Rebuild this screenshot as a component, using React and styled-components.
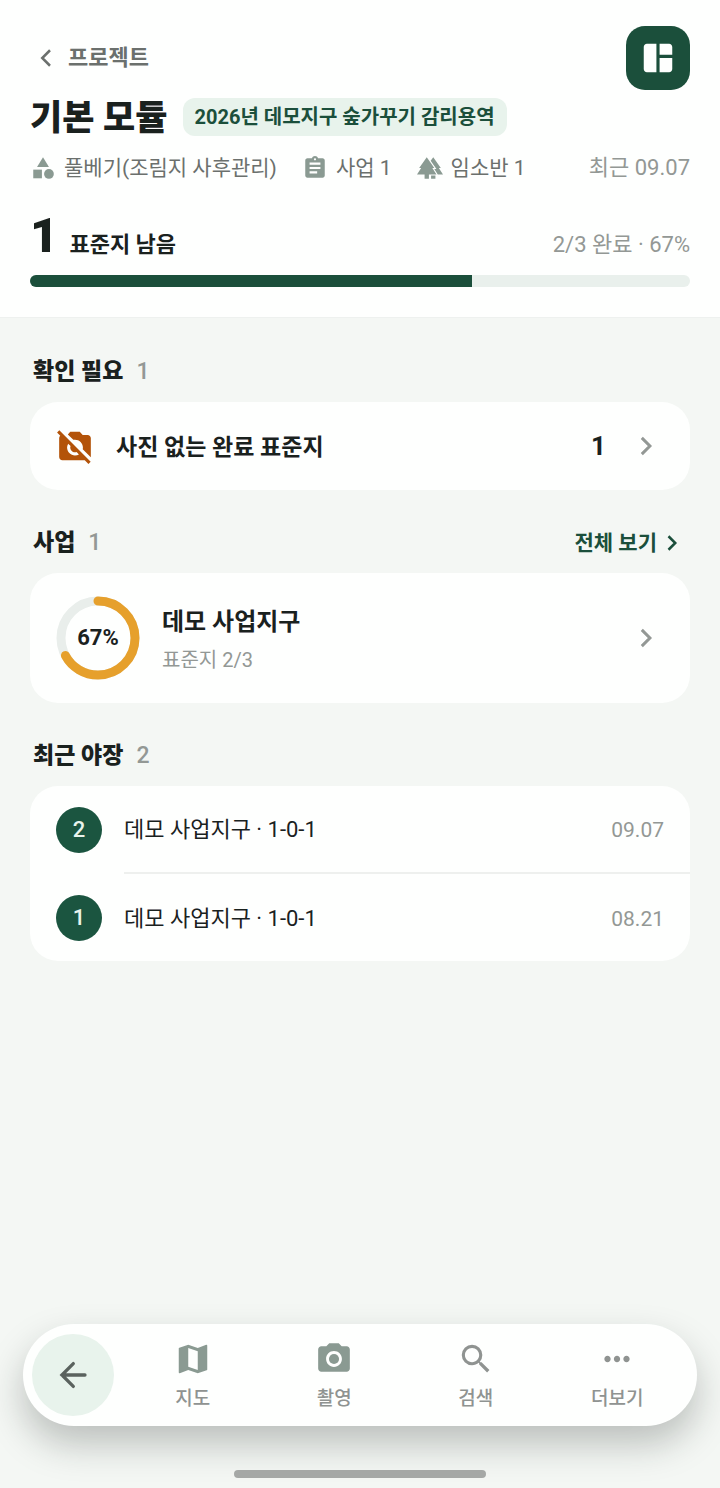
import React from "react"
import styled, { createGlobalStyle } from "styled-components"
import {
    MdAssignment,
    MdCategory,
    MdForest,
    MdMap,
    MdMoreHoriz,
    MdNoPhotography,
    MdPhotoCamera,
    MdSearch,
    MdSpaceDashboard,
} from "react-icons/md"

const project = {
    name: "기본 모듈",
    contract: "2026년 데모지구 숲가꾸기 감리용역",
    recent: "최근 09.07",
    done: 2,
    total: 3,
};

const tags = [
    { label: "풀베기(조림지 사후관리)", icon: MdCategory },
    { label: "사업 1", icon: MdAssignment },
    { label: "임소반 1", icon: MdForest },
];

const notes = [
    { id: 2, title: "데모 사업지구 · 1-0-1", date: "09.07" },
    { id: 1, title: "데모 사업지구 · 1-0-1", date: "08.21" },
];

const tabs = [
    { label: "지도", icon: MdMap, color: "#8a9a92" },
    { label: "촬영", icon: MdPhotoCamera, color: "#8a9a92" },
    { label: "검색", icon: MdSearch, color: "#8f9391" },
    { label: "더보기", icon: MdMoreHoriz, color: "#8f9391" },
];

const Chevron = ({ size = 30, left, color = "currentColor" }) => (
    <svg width={size} height={size} viewBox="0 0 24 24" fill="none" aria-hidden="true">
        <path
            d={left ? "M16 5.8 9.8 12l6.2 6.2" : "M9.2 6.6 14.6 12l-5.4 5.4"}
            stroke={color}
            strokeWidth="2"
        />
    </svg>
);

const Ring = ({ percent }) => {
    const length = 2 * Math.PI * 37;
    return (
        <RingBox>
            <svg width="84" height="84" viewBox="0 0 84 84" fill="none" aria-hidden="true">
                <circle cx="42" cy="42" r="37" stroke="#e9eeeb" strokeWidth="9" />
                <circle
                    cx="42"
                    cy="42"
                    r="37"
                    stroke="#e6a02c"
                    strokeWidth="9"
                    strokeLinecap="round"
                    strokeDasharray={`${(length * percent) / 100} ${length}`}
                    transform="rotate(-90 42 42)"
                />
            </svg>
            <RingLabel>{percent}%</RingLabel>
        </RingBox>
    );
};

const App = () => {
    const percent = Math.round((project.done / project.total) * 100);

    return (
        <Page>
            <GlobalStyle />
            <Header>
                <TopRow>
                    <BackLink href="#projects">
                        <Chevron left />
                        프로젝트
                    </BackLink>
                    <ModuleButton type="button" aria-label="모듈">
                        <MdSpaceDashboard size={38} />
                    </ModuleButton>
                </TopRow>
                <TitleRow>
                    <Title>{project.name}</Title>
                    <Pill>{project.contract}</Pill>
                </TitleRow>
                <MetaRow>
                    {tags.map(({ label, icon: Icon }) => (
                        <Tag key={label}>
                            <Icon size={26} />
                            {label}
                        </Tag>
                    ))}
                    <Recent>{project.recent}</Recent>
                </MetaRow>
                <StatRow>
                    <Remaining>{project.total - project.done}</Remaining>
                    <RemainingLabel>표준지 남음</RemainingLabel>
                    <Summary>
                        {project.done}/{project.total} 완료 · {percent}%
                    </Summary>
                </StatRow>
                <Track>
                    <Fill style={{ width: `${percent}%` }} />
                </Track>
            </Header>

            <Main>
                <section>
                    <SectionHead>
                        <SectionTitle>확인 필요</SectionTitle>
                        <Count>1</Count>
                    </SectionHead>
                    <Card>
                        <CardButton type="button">
                            <WarnIcon size={38} />
                            <AlertText>사진 없는 완료 표준지</AlertText>
                            <AlertCount>1</AlertCount>
                            <Chevron size={36} color="#939895" />
                        </CardButton>
                    </Card>
                </section>

                <section>
                    <SectionHead>
                        <SectionTitle>사업</SectionTitle>
                        <Count>1</Count>
                        <MoreLink href="#all">
                            전체 보기
                            <Chevron />
                        </MoreLink>
                    </SectionHead>
                    <Card>
                        <CardButton type="button" $tall>
                            <Ring percent={percent} />
                            <SiteText>
                                <SiteName>데모 사업지구</SiteName>
                                <SiteSub>표준지 2/3</SiteSub>
                            </SiteText>
                            <Chevron size={36} color="#939895" />
                        </CardButton>
                    </Card>
                </section>

                <section>
                    <SectionHead>
                        <SectionTitle>최근 야장</SectionTitle>
                        <Count>2</Count>
                    </SectionHead>
                    <Card>
                        {notes.map((note) => (
                            <NoteRow key={note.id} type="button">
                                <Badge>{note.id}</Badge>
                                <NoteBody>
                                    <span>{note.title}</span>
                                    <NoteDate>{note.date}</NoteDate>
                                </NoteBody>
                            </NoteRow>
                        ))}
                    </Card>
                </section>
            </Main>

            <Footer>
                <TabBar>
                    <BackButton type="button" aria-label="뒤로">
                        <svg width="36" height="36" viewBox="0 0 24 24" fill="none">
                            <path
                                d="M20 12H4.6M12.2 4.4 4.6 12l7.6 7.6"
                                stroke="currentColor"
                                strokeWidth="2.2"
                                strokeLinecap="round"
                            />
                        </svg>
                    </BackButton>
                    {tabs.map(({ label, icon: Icon, color }) => (
                        <Tab key={label} type="button">
                            <Icon size={38} color={color} />
                            {label}
                        </Tab>
                    ))}
                </TabBar>
                <HomeIndicator />
            </Footer>
        </Page>
    );
}

export default App

const GlobalStyle = createGlobalStyle`
    * {
        box-sizing: border-box;
    }

    body {
        margin: 0;
        background: #f4f7f4;
        color: #1a211e;
        font-family: Roboto, "Noto Sans CJK KR", sans-serif;
        font-size: 21px;
    }

    button {
        border: 0;
        padding: 0;
        background: none;
        color: inherit;
        font: inherit;
        text-align: left;
        cursor: pointer;
    }

    a {
        color: inherit;
        text-decoration: none;
    }

    svg {
        display: block;
        flex: none;
    }
`

const Page = styled.div`
    display: flex;
    flex-direction: column;
    min-height: 100vh;
`

const Header = styled.header`
    padding: 26px 30px 30px;
    background: #fefffe;
    border-bottom: 1px solid #eef1ef;
`

const TopRow = styled.div`
    display: flex;
    align-items: center;
    justify-content: space-between;
`

const BackLink = styled.a`
    display: flex;
    align-items: center;
    gap: 8px;
    font-size: 22px;
    line-height: 32px;
    font-weight: 700;
    color: #6b706d;
`

const ModuleButton = styled.button`
    display: grid;
    place-items: center;
    width: 64px;
    height: 64px;
    border-radius: 19px;
    background: #1b4f3b;
    color: #fefffe;
`

const TitleRow = styled.div`
    display: flex;
    align-items: center;
    gap: 15px;
    margin-top: 8px;
`

const Title = styled.h1`
    margin: 0;
    padding-top: 4px;
    font-size: 35px;
    line-height: 34px;
    font-weight: 900;
`

const Pill = styled.span`
    padding: 0 12px;
    border-radius: 12px;
    background: #e8f3ec;
    color: #1b4f3b;
    font-size: 20px;
    line-height: 38px;
    font-weight: 700;
`

const MetaRow = styled.div`
    display: flex;
    align-items: center;
    gap: 25px;
    margin-top: 16px;
    line-height: 32px;
`

const Tag = styled.span`
    display: flex;
    align-items: center;
    gap: 8px;
    color: #6b706d;

    svg {
        color: #8a9a92;
    }
`

const Recent = styled.span`
    margin-left: auto;
    font-size: 22px;
    color: #939895;
`

const StatRow = styled.div`
    display: flex;
    align-items: baseline;
    margin-top: 24px;
    line-height: 56px;
`

const Remaining = styled.strong`
    font-size: 49px;
    font-weight: 900;
`

const RemainingLabel = styled.span`
    margin-left: 11px;
    font-size: 22px;
    font-weight: 700;
`

const Summary = styled.span`
    margin-left: auto;
    font-size: 22px;
    color: #939895;
`

const Track = styled.div`
    height: 12px;
    margin-top: 2px;
    overflow: hidden;
    border-radius: 6px;
    background: #e9f0ec;
`

const Fill = styled.div`
    height: 100%;
    background: #1b4f3b;
`

const Main = styled.main`
    display: flex;
    flex: 1;
    flex-direction: column;
    gap: 19px;
    padding: 20px 30px 40px;
`

const SectionHead = styled.div`
    display: flex;
    align-items: center;
    gap: 13px;
    height: 64px;
    padding: 4px 3px 0;
`

const SectionTitle = styled.h2`
    margin: 0;
    font-size: 23px;
    line-height: 32px;
    font-weight: 900;
`

const Count = styled.span`
    font-size: 23px;
    line-height: 32px;
    font-weight: 500;
    color: #939895;
`

const MoreLink = styled.a`
    display: flex;
    align-items: center;
    margin-left: auto;
    line-height: 32px;
    font-weight: 700;
    color: #1b4f3b;
`

const Card = styled.div`
    overflow: hidden;
    border-radius: 28px;
    background: #fefffe;
`

const CardButton = styled.button`
    display: flex;
    align-items: center;
    width: 100%;
    min-height: ${({ $tall }) => ($tall ? "130px" : "88px")};
    padding: 0 26px;
`

const WarnIcon = styled(MdNoPhotography)`
    color: #b35309;
`

const AlertText = styled.span`
    flex: 1;
    margin-left: 22px;
    padding-top: 3px;
    font-size: 23px;
    line-height: 32px;
    font-weight: 700;
`

const AlertCount = styled.span`
    margin-right: 22px;
    font-size: 26px;
    line-height: 32px;
    font-weight: 700;
`

const RingBox = styled.span`
    display: grid;
    place-items: center;

    > * {
        grid-area: 1 / 1;
    }
`

const RingLabel = styled.span`
    font-size: 22px;
    line-height: 32px;
    font-weight: 700;
`

const SiteText = styled.span`
    display: flex;
    flex: 1;
    flex-direction: column;
    gap: 6px;
    margin-left: 22px;
    padding-top: 5px;
`

const SiteName = styled.span`
    font-size: 24px;
    line-height: 32px;
    font-weight: 700;
`

const SiteSub = styled.span`
    font-size: 20px;
    line-height: 32px;
    color: #939895;
`

const NoteRow = styled.button`
    display: flex;
    align-items: center;
    gap: 22px;
    width: 100%;
    padding-left: 26px;
`

const Badge = styled.span`
    width: 46px;
    border-radius: 50%;
    background: #1b5540;
    color: #e8f3ec;
    font-size: 22px;
    line-height: 46px;
    font-weight: 500;
    text-align: center;
`

const NoteBody = styled.span`
    display: flex;
    flex: 1;
    align-items: center;
    justify-content: space-between;
    height: 87px;
    padding: 2px 26px 0 0;
    font-size: 22px;
    line-height: 32px;

    ${NoteRow}:not(:last-child) & {
        border-bottom: 2px solid #eef0ee;
        height: 88px;
    }
`

const NoteDate = styled.span`
    font-size: 21px;
    color: #939895;
`

const Footer = styled.footer`
    padding: 0 23px 10px;
`

const TabBar = styled.nav`
    display: flex;
    align-items: center;
    height: 102px;
    padding: 0 9px;
    border-radius: 51px;
    background: #fefffe;
    box-shadow: 0 18px 36px rgba(26, 33, 30, 0.26);
`

const BackButton = styled.button`
    display: grid;
    place-items: center;
    width: 82px;
    height: 82px;
    margin-right: 8px;
    border-radius: 50%;
    background: #e8f3ec;
    color: #5a625e;
`

const Tab = styled.button`
    display: flex;
    flex: 1;
    flex-direction: column;
    align-items: center;
    gap: 5px;
    padding-top: 5px;
    font-size: 19px;
    line-height: 32px;
    font-weight: 500;
    color: #8f9391;
`

const HomeIndicator = styled.div`
    width: 252px;
    height: 8px;
    margin: 44px auto 0;
    border-radius: 4px;
    background: #a5a8a6;
`
